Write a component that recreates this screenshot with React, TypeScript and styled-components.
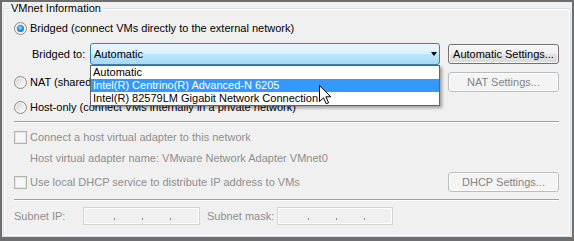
import styled, { createGlobalStyle } from 'styled-components';

const GlobalStyle = createGlobalStyle`
	body {
		margin: 0;
		background: #ffffff;
		font-family: 'Liberation Sans', Arial, sans-serif;
		font-size: 11px;
	}
`;

const Frame = styled.div`
	position: relative;
	width: 574px;
	height: 241px;
	box-sizing: border-box;
	border: 2px solid #6e6e6e;
	border-bottom-width: 4px;
	background: #f0f0f0;
	padding: 0 1px;
`;

const Group = styled.fieldset`
	margin: 0;
	padding: 0;
	height: 235px;
	box-sizing: border-box;
	border: 1px solid #d5dfe5;
	border-radius: 3px;
	box-shadow: inset 0 0 0 1px #ffffff;
`;

const Legend = styled.legend`
	margin-left: 5px;
	padding: 0 2px;
	line-height: 13px;
	color: #000000;
`;

const Content = styled.div`
	display: flex;
	flex-direction: column;
	padding: 3px 11px 0 10px;
`;

const Row = styled.div<{ $top?: number; $height?: number; $tight?: boolean }>`
	display: flex;
	align-items: center;
	gap: ${(p) => (p.$tight ? 0 : 3)}px;
	margin-top: ${(p) => p.$top ?? 0}px;
	height: ${(p) => p.$height ?? 20}px;
	line-height: 13px;
	white-space: nowrap;
`;

const Text = styled.span<{ $disabled?: boolean; $indent?: number; $width?: number }>`
	color: ${(p) => (p.$disabled ? '#8e8e8e' : '#000000')};
	padding-left: ${(p) => p.$indent ?? 0}px;
	${(p) => (p.$width ? `width: ${p.$width}px; flex: none;` : '')}
`;

const Radio = styled.span<{ $checked?: boolean }>`
	flex: none;
	width: 13px;
	height: 13px;
	box-sizing: border-box;
	border-radius: 50%;
	border: 1px solid #8b8b8b;
	background: linear-gradient(135deg, #d2d2d2 0%, #ececec 55%, #ffffff 100%);
	box-shadow: inset 0 0 0 1px #f4f4f4;
	display: flex;
	align-items: center;
	justify-content: center;

	&::after {
		content: '';
		display: ${(p) => (p.$checked ? 'block' : 'none')};
		width: 7px;
		height: 7px;
		border-radius: 50%;
		background: radial-gradient(circle at 45% 40%, #9fe3ff 0%, #2f93e3 45%, #19457f 100%);
	}
`;

const Checkbox = styled.span`
	flex: none;
	width: 13px;
	height: 13px;
	box-sizing: border-box;
	border: 1px solid #b1b1b1;
	background: #f6f6f6;
	box-shadow: inset 0 0 0 1px #e6e6e6;
`;

const Button = styled.div<{ $disabled?: boolean }>`
	flex: none;
	margin-left: auto;
	width: 111px;
	height: 20px;
	box-sizing: border-box;
	display: flex;
	align-items: center;
	justify-content: center;
	border-radius: 3px;
	border: 1px solid ${(p) => (p.$disabled ? '#b9bdc0' : '#707070')};
	background: ${(p) =>
		p.$disabled
			? '#f4f4f4'
			: 'linear-gradient(#f6f6f6 0%, #efefef 50%, #e3e3e3 50%, #d9d9d9 100%)'};
	box-shadow: inset 0 0 0 1px #fcfcfc;
	color: ${(p) => (p.$disabled ? '#838383' : '#000000')};
`;

const ComboWrap = styled.div`
	position: relative;
	flex: none;
	width: 350px;
	height: 22px;
`;

const Combo = styled.div`
	height: 100%;
	box-sizing: border-box;
	display: flex;
	align-items: center;
	padding-left: 3px;
	border: 1px solid #3c7fb1;
	border-radius: 3px;
	background: linear-gradient(#eaf6fd 0%, #d9f0fc 50%, #bee6fd 50%, #a7d9f5 100%);
`;

const Arrow = styled.span`
	margin-left: auto;
	margin-right: 2px;
	width: 0;
	height: 0;
	border-left: 3.5px solid transparent;
	border-right: 3.5px solid transparent;
	border-top: 4px solid #000000;
`;

const List = styled.div`
	position: absolute;
	left: 0;
	top: 100%;
	width: 350px;
	box-sizing: border-box;
	border: 1px solid #646464;
	background: #ffffff;
	box-shadow: 2px 2px 3px rgba(0, 0, 0, 0.35);
	z-index: 2;
`;

const ListItem = styled.div<{ $active?: boolean }>`
	height: 13px;
	line-height: 13px;
	padding-left: 2px;
	background: ${(p) => (p.$active ? '#3399ff' : 'transparent')};
	color: ${(p) => (p.$active ? '#ffffff' : '#000000')};
`;

const Separator = styled.div<{ $top: number }>`
	margin-top: ${(p) => p.$top}px;
	height: 0;
	border-top: 1px solid #a0a0a0;
	border-bottom: 1px solid #ffffff;
`;

const IpBox = styled.div<{ $width: number }>`
	flex: none;
	width: ${(p) => p.$width}px;
	height: 18px;
	box-sizing: border-box;
	display: flex;
	align-items: flex-end;
	gap: 27px;
	padding: 0 0 4px 30px;
	border: 1px solid #d4d4d4;
	box-shadow: inset 0 0 0 1px #ffffff;
	background: #f0f0f0;
`;

const IpDot = styled.span`
	width: 1px;
	height: 2px;
	background: #8a86a0;
`;

const Cursor = styled.svg`
	position: absolute;
	left: 317px;
	top: 83px;
	z-index: 3;
`;

function IpField({ width }: { width: number }) {
	return (
		<IpBox $width={width}>
			<IpDot />
			<IpDot />
			<IpDot />
		</IpBox>
	);
}

export default function App() {
	return (
		<>
			<GlobalStyle />
			<Frame>
				<Group>
					<Legend>VMnet Information</Legend>
					<Content>
						<Row>
							<Radio $checked />
							<Text>Bridged (connect VMs directly to the external network)</Text>
						</Row>
						<Row $top={5} $height={22} $tight>
							<Text $indent={18} $width={58}>
								Bridged to:
							</Text>
							<ComboWrap>
								<Combo>
									Automatic
									<Arrow />
								</Combo>
								<List>
									<ListItem>Automatic</ListItem>
									<ListItem $active>Intel(R) Centrino(R) Advanced-N 6205</ListItem>
									<ListItem>Intel(R) 82579LM Gigabit Network Connection</ListItem>
								</List>
							</ComboWrap>
							<Button>Automatic Settings...</Button>
						</Row>
						<Row $top={7}>
							<Radio />
							<Text>NAT (shared host's IP address with VMs)</Text>
							<Button $disabled>NAT Settings...</Button>
						</Row>
						<Row $top={5}>
							<Radio />
							<Text>Host-only (connect VMs internally in a private network)</Text>
						</Row>
						<Separator $top={4} />
						<Row $top={4}>
							<Checkbox />
							<Text $disabled>Connect a host virtual adapter to this network</Text>
						</Row>
						<Row $top={1}>
							<Text $disabled $indent={16}>
								Host virtual adapter name: VMware Network Adapter VMnet0
							</Text>
						</Row>
						<Row $top={4}>
							<Checkbox />
							<Text $disabled>Use local DHCP service to distribute IP address to VMs</Text>
							<Button $disabled>DHCP Settings...</Button>
						</Row>
						<Separator $top={7} />
						<Row $top={6} $height={18} $tight>
							<Text $disabled $width={69}>
								Subnet IP:
							</Text>
							<IpField width={117} />
							<Text $disabled $indent={7} $width={70}>
								Subnet mask:
							</Text>
							<IpField width={116} />
						</Row>
					</Content>
				</Group>
				<Cursor width="13" height="20" viewBox="0 0 13 20">
					<path
						d="M0.5 0.5 L0.5 16.5 L4.5 12.8 L7.2 18.8 L9.6 17.8 L6.9 11.8 L11.8 11.8 Z"
						fill="#ffffff"
						stroke="#000000"
						strokeWidth="1"
						strokeLinejoin="miter"
					/>
				</Cursor>
			</Frame>
		</>
	);
}
